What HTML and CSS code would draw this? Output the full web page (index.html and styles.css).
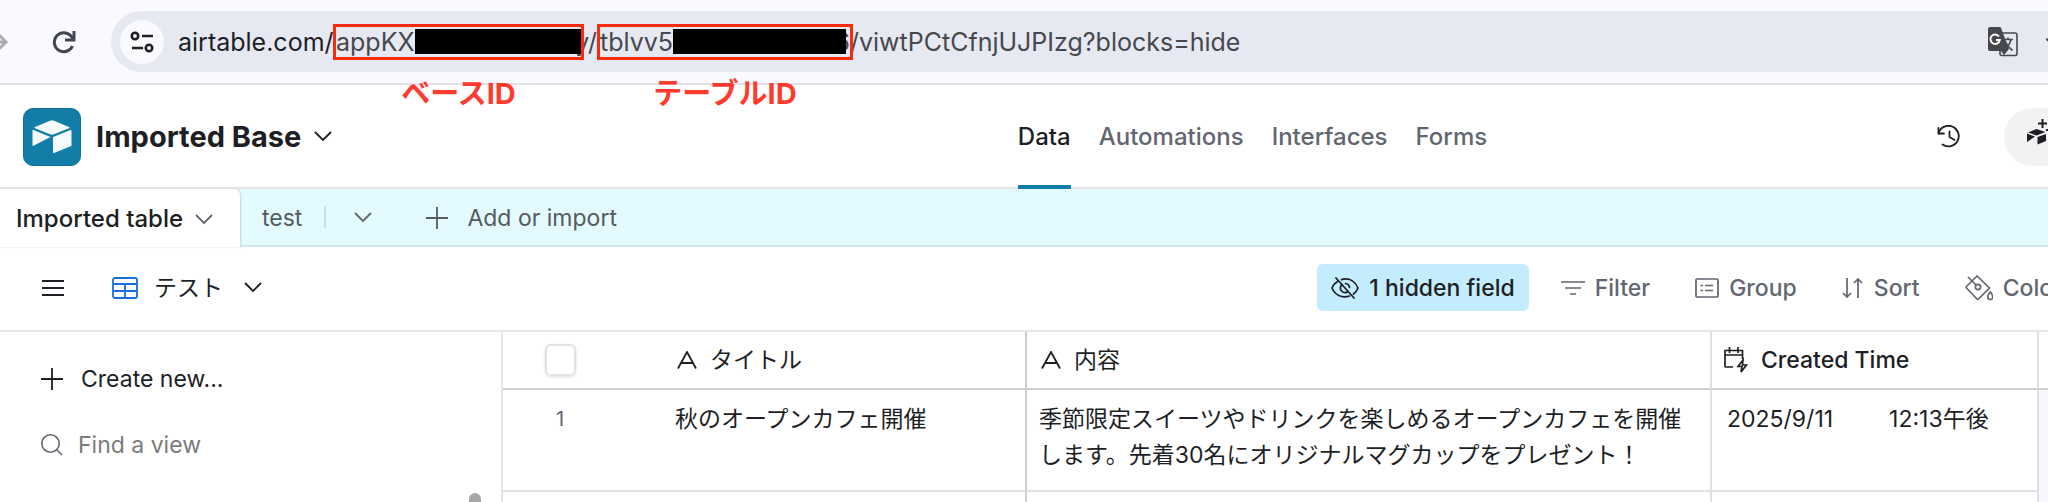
FILE: index.html
```html
<!DOCTYPE html>
<html lang="ja">

<head>
  <meta charset="UTF-8">
  <meta name="viewport" content="width=device-width, initial-scale=1.0">
  <title>Imported Base</title>
  <link rel="stylesheet" href="styles.css">
</head>

<body>
  <!-- Browser bar -->
  <div class="browser-bar">
    <button class="icon-button forward" aria-label="Forward">
      <svg width="20" height="24" viewBox="0 0 20 24" fill="none" stroke="#aaaab0" stroke-width="3"><path d="M0 12h17M8 3l9 9-9 9"/></svg>
    </button>
    <button class="icon-button" aria-label="Reload">
      <svg width="24" height="24" viewBox="0 0 24 24" fill="none" stroke="#3f4554" stroke-width="3"><path d="M20.500 16A9.500 9.500 0 1 1 19 6l2 2.500"/><path d="M22 1v9h-9"/></svg>
    </button>
    <div class="address-bar">
      <button class="site-info" aria-label="Site information">
        <svg width="24" height="24" viewBox="0 0 24 24" fill="none" stroke="#1f1f24" stroke-width="2.600"><circle cx="5" cy="6" r="3.200"/><path d="M12 6h11M2 18h11"/><circle cx="19" cy="18" r="3.200"/></svg>
      </button>
      <div class="url" role="textbox" aria-label="Address">
        <span class="host">airtable.com/</span>
        <span class="mark mark-base"><span>appKX</span><i class="mask"></i><b class="mark-label">ベースID</b></span>
        <span class="slash">y/</span>
        <span class="mark mark-table"><span>tblvv5</span><i class="mask"></i><span>6</span><b class="mark-label">テーブルID</b></span>
        <span class="path">/viwtPCtCfnjUJPIzg?blocks=hide</span>
      </div>
      <button class="icon-button translate" aria-label="Translate">
        <svg width="30" height="30" viewBox="0 0 30 30"><rect x="12" y="6" width="17" height="22.500" rx="2" fill="none" stroke="#47484d" stroke-width="1.600"/><path d="M2 0h9.500a2 2 0 0 1 1.600 1.200L21 22l-5 6-3-4H2a2 2 0 0 1-2-2V2a2 2 0 0 1 2-2z" fill="#47484d"/><path d="M11 9.500A4.700 4.700 0 1 0 11.800 13H8" fill="none" stroke="#fff" stroke-width="1.900"/><path d="M15.500 12.500H25M20 10.500v2M23 12.500q-1.500 6-6 9.500M17.500 15q2.500 5 7 8.500" fill="none" stroke="#47484d" stroke-width="1.600"/></svg>
      </button>
      <button class="icon-button star" aria-label="Bookmark">
        <svg width="26" height="26" viewBox="0 0 26 26" fill="none" stroke="#47484d" stroke-width="2"><path d="M13 2l3 8 9 .5-7 5.500 2.500 8.500L13 19.500 5.500 24.500 8 16 1 10.500l9-.5z"/></svg>
      </button>
    </div>
  </div>

  <!-- Base header -->
  <header class="base-header">
    <div class="brand">
      <div class="logo">
        <svg width="40" height="34" viewBox="0 0 40 34" fill="#f5fafc"><path d="M18 .8a5 5 0 0 1 4 0L37 7a.6.6 0 0 1 0 1.200L22 14.200a5 5 0 0 1-4 0L3 8.200A.6.6 0 0 1 3 7z"/><path d="M39.500 10.500v14.700a1 1 0 0 1-.7 1L22 33a.7.7 0 0 1-1-.7V17.800a1 1 0 0 1 .7-1l16.800-6.700a.7.7 0 0 1 1 .4z"/><path d="M.5 10.500a.7.7 0 0 1 1-.5L18.500 17 1.500 25.800a.7.7 0 0 1-1-.6z"/></svg>
      </div>
      <h1>Imported Base</h1>
      <button class="icon-button" aria-label="Base menu">
        <svg class="chevron dark" viewBox="0 0 18 11"><path d="M1 1l8 8 8-8"/></svg>
      </button>
    </div>
    <nav class="main-nav">
      <a href="#" class="active">Data</a>
      <a href="#">Automations</a>
      <a href="#">Interfaces</a>
      <a href="#">Forms</a>
    </nav>
    <div class="header-tools">
      <button class="icon-button" aria-label="History">
        <svg width="24" height="24" viewBox="0 0 24 24" fill="none" stroke="#1d1f25" stroke-width="1.800" stroke-linecap="round" stroke-linejoin="round"><path d="M1.500 8.500A10.300 10.300 0 1 1 5.500 19.500"/><path d="M1.500 3v5.500H7M12.500 6.500V12l5 3"/></svg>
      </button>
      <button class="assistant" aria-label="Assistant">
        <svg width="34" height="36" viewBox="0 0 34 36" fill="#1d1f25"><path d="M9.500 10L18.500 13 9.500 16.500 1 13.500z"/><path d="M0 14.500l8 3-8 5.500zM19 15v7L10.500 25.500V18z"/><path d="M15.500 0v9M11 4.500h9M23 7v8M19 11h8" stroke="#1d1f25" stroke-width="2"/></svg>
      </button>
    </div>
  </header>

  <!-- Table tabs -->
  <div class="tabs">
    <button class="tab active">Imported table
      <svg class="chevron" viewBox="0 0 18 11"><path d="M1 1l8 8 8-8"/></svg>
    </button>
    <button class="tab">test</button>
    <span class="divider"></span>
    <button class="icon-button tab-list" aria-label="All tables">
      <svg class="chevron" viewBox="0 0 18 11"><path d="M1 1l8 8 8-8"/></svg>
    </button>
    <button class="tab add-tab">
      <svg width="22" height="22" viewBox="0 0 22 22" fill="none" stroke="#555b5e" stroke-width="1.800"><path d="M11 0v22M0 11h22"/></svg>
      Add or import
    </button>
  </div>

  <!-- View toolbar -->
  <div class="toolbar">
    <button class="icon-button" aria-label="Toggle sidebar">
      <svg width="22" height="18" viewBox="0 0 22 18" stroke="#1d1f25" stroke-width="1.800"><path d="M0 2h22M0 9h22M0 16h22"/></svg>
    </button>
    <button class="view-name">
      <svg width="26" height="22" viewBox="0 0 26 22" fill="none" stroke="#166ee1" stroke-width="1.800"><rect x="1" y="1" width="24" height="20" rx="2"/><path d="M1 7h24M1 14h24M13 7v14"/></svg>
      <span>テスト</span>
      <svg class="chevron dark" viewBox="0 0 18 11"><path d="M1 1l8 8 8-8"/></svg>
    </button>
    <div class="tools">
      <button class="tool hidden-field">
        <svg width="28" height="22" viewBox="0 0 28 22" fill="none" stroke="#1d1f25" stroke-width="1.700" stroke-linecap="round"><path d="M5 1l18 20M10.500 2.600C19 .2 24.500 5 27 11c-1 2.500-2.500 4.500-4.500 6M6.500 4.500C4 6 2 8.500 1 11c3 7 9.500 10.500 17.500 8"/><path d="M11 7.500a4.600 4.600 0 0 0 6 7M14.500 6.500a4.600 4.600 0 0 1 4 4"/></svg>
        1 hidden field
      </button>
      <button class="tool">
        <svg width="24" height="14" viewBox="0 0 24 14" stroke="#616670" stroke-width="1.700"><path d="M0 1h24M4 7h16M9 13h6"/></svg>
        Filter
      </button>
      <button class="tool">
        <svg width="24" height="20" viewBox="0 0 24 20" fill="none" stroke="#616670" stroke-width="1.700"><rect x="1" y="1" width="22" height="18" rx="1"/><path d="M5.500 7.500h2.500M10 7.500h8M5.500 12.500h2.500M10 12.500h8"/></svg>
        Group
      </button>
      <button class="tool">
        <svg width="22" height="20" viewBox="0 0 22 20" fill="none" stroke="#616670" stroke-width="1.700"><path d="M5 0v19M1 15l4 4 4-4M16 20V1M12 5l4-4 4 4"/></svg>
        Sort
      </button>
      <button class="tool">
        <svg width="28" height="26" viewBox="0 0 28 26" fill="none" stroke="#616670" stroke-width="1.700"><path d="M12 1L1.500 11.500a1 1 0 0 0 0 1.500L12 24a1 1 0 0 0 1.500 0L24.500 13z"/><path d="M3 2l8 8"/><circle cx="13" cy="12" r="2.600"/><path d="M25.300 17q-2.500 3-2.500 5a2.500 2.500 0 0 0 5 0q0-2-2.500-5z"/></svg>
        Color
      </button>
    </div>
  </div>

  <main class="workspace">
    <aside class="sidebar">
      <button class="create-view">
        <svg width="22" height="22" viewBox="0 0 22 22" fill="none" stroke="#1d1f25" stroke-width="1.800"><path d="M11 0v22M0 11h22"/></svg>
        Create new...
      </button>
      <label class="find-view">
        <svg width="22" height="22" viewBox="0 0 22 22" fill="none" stroke="#616670" stroke-width="1.600"><circle cx="9.500" cy="9.500" r="8.700"/><path d="M15.500 15.500l5.500 5.500"/></svg>
        <input type="text" placeholder="Find a view" aria-label="Find a view">
      </label>
      <div class="scroll-thumb"></div>
    </aside>

    <table class="grid">
      <colgroup>
        <col class="col-number">
        <col class="col-title">
        <col class="col-content">
        <col class="col-time">
        <col>
      </colgroup>
      <thead>
        <tr>
          <th class="number"><input type="checkbox" aria-label="Select all rows"></th>
          <th class="title">
            <div class="field"><svg class="text-icon" viewBox="0 0 20 18"><path d="M1 17.500L10 1l9 16.500M4.500 12h11"/></svg>タイトル</div>
          </th>
          <th>
            <div class="field"><svg class="text-icon" viewBox="0 0 20 18"><path d="M1 17.500L10 1l9 16.500M4.500 12h11"/></svg>内容</div>
          </th>
          <th>
            <div class="field time-field">
              <svg width="24" height="26" viewBox="0 0 24 26" fill="none" stroke="#1d1f25" stroke-width="1.700"><path d="M9 20H2a1 1 0 0 1-1-1V3.500h17.500V12M1 8h17.500M5.500 0v6M14 0v6"/><path d="M19 13l-5 6.500h4l-1 5.500 5.500-7h-4z"/></svg>
              Created Time
            </div>
          </th>
          <th></th>
        </tr>
      </thead>
      <tbody>
        <tr>
          <td class="number">1</td>
          <td class="title">秋のオープンカフェ開催</td>
          <td class="content">季節限定スイーツやドリンクを楽しめるオープンカフェを開催します。先着30名にオリジナルマグカップをプレゼント！</td>
          <td><div class="time"><span>2025/9/11</span><span>12:13午後</span></div></td>
          <td class="empty"></td>
        </tr>
        <tr class="next-row">
          <td></td>
          <td class="title"></td>
          <td></td>
          <td></td>
          <td class="empty"></td>
        </tr>
      </tbody>
    </table>
  </main>
</body>

</html>
```
FILE: styles.css
```css
* {
  box-sizing: border-box;
  margin: 0;
  padding: 0;
}

body {
  height: 100vh;
  display: flex;
  flex-direction: column;
  overflow: hidden;
  background: #fff;
  color: #1d1f25;
  font-family: Inter, "Noto Sans CJK JP", sans-serif;
  font-size: 23px;
  line-height: 36px;
}

button {
  border: none;
  background: none;
  color: inherit;
  font: inherit;
  cursor: pointer;
}

svg {
  display: block;
  flex-shrink: 0;
}

.icon-button {
  display: flex;
  flex-shrink: 0;
}

.chevron {
  width: 18px;
  height: 11px;
  fill: none;
  stroke: #616670;
  stroke-width: 1.8;
}

.chevron.dark {
  stroke: #1d1f25;
}

/* Browser bar */
.browser-bar {
  flex-shrink: 0;
  display: flex;
  align-items: center;
  height: 85px;
  border-bottom: 2px solid #e3e1ec;
  background: #faf9ff;
}

.forward {
  margin-left: -11px;
  margin-right: 43px;
}

.address-bar {
  flex: 1;
  display: flex;
  align-items: center;
  height: 61px;
  margin-left: 35px;
  padding-left: 9px;
  border-radius: 31px 0 0 31px;
  background: #e7e9f2;
}

.site-info {
  display: flex;
  align-items: center;
  justify-content: center;
  width: 44px;
  height: 44px;
  margin-right: 14px;
  border-radius: 50%;
  background: #faf9ff;
}

.url {
  display: flex;
  align-items: center;
  color: #47484d;
  font-size: 25px;
  white-space: nowrap;
}

.host {
  width: 155px;
  color: #1d1f25;
}

.mark {
  position: relative;
  display: flex;
  align-items: center;
  height: 36px;
  border: 3px solid #fa2a0c;
}

.mark-base {
  z-index: 1;
  width: 251px;
}

.mark-table {
  width: 256px;
}

.slash {
  margin-left: -9px;
  width: 22px;
  text-align: right;
}

.mask {
  position: relative;
  flex: 1;
  height: 25px;
  background: #000;
}

.mark-table .mask {
  margin-right: -12px;
}

.mark-label {
  position: absolute;
  left: 0;
  right: 0;
  top: 49px;
  color: #ff3b30;
  font-size: 29px;
  line-height: 36px;
  text-align: center;
}

.path {
  margin-left: -3px;
}

.translate {
  margin-left: auto;
  margin-right: 28px;
}

.star {
  margin-right: -24px;
}

/* Base header */
.base-header {
  flex-shrink: 0;
  display: grid;
  grid-template-columns: 49.7% auto 1fr;
  height: 104px;
  border-bottom: 2px solid #e5e5e7;
}

.brand {
  display: flex;
  align-items: center;
  padding-left: 23px;
  padding-bottom: 1px;
}

.logo {
  display: flex;
  align-items: center;
  justify-content: center;
  width: 58px;
  height: 58px;
  margin-right: 15px;
  border: 1px solid #10709a;
  border-radius: 10px;
  background: #127da6;
}

h1 {
  margin-right: 13px;
  font-size: 29px;
  font-weight: 700;
}

.main-nav {
  display: flex;
  gap: 28px;
}

.main-nav a {
  height: 104px;
  color: #616670;
  font-size: 24px;
  font-weight: 500;
  line-height: 103px;
  text-decoration: none;
}

.main-nav .active {
  border-bottom: 4px solid #127da6;
  color: #1d1f25;
}

.header-tools {
  display: flex;
  align-items: center;
  justify-content: flex-end;
  gap: 43px;
}

.assistant {
  width: 100px;
  height: 58px;
  margin-right: -56px;
  padding-left: 23px;
  border-radius: 29px;
  background: #f2f2f2;
}

/* Table tabs */
.tabs {
  flex-shrink: 0;
  display: flex;
  align-items: center;
  height: 58px;
  border-bottom: 2px solid #d3e7ed;
  background: #e3fafe;
}

.tab {
  display: flex;
  align-items: center;
  height: 58px;
  padding-top: 2px;
  color: #555b5e;
}

.tab.active {
  gap: 12px;
  width: 240px;
  margin-right: 22px;
  margin-bottom: -2px;
  padding-left: 16px;
  border-radius: 0 6px 0 0;
  background: #fff;
  box-shadow: 1px 0 2px #c5d6da;
  color: #1d1f25;
  font-size: 24px;
  font-weight: 500;
}

.divider {
  width: 2px;
  height: 22px;
  margin-left: 22px;
  background: #cbdfe4;
}

.tab-list {
  margin: 0 54px 0 28px;
}

.add-tab {
  gap: 19px;
}

/* View toolbar */
.toolbar {
  flex-shrink: 0;
  display: flex;
  align-items: center;
  height: 85px;
  padding-left: 42px;
  padding-bottom: 2px;
  border-bottom: 2px solid #e5e5e5;
}

.view-name {
  display: flex;
  align-items: center;
  gap: 16px;
  margin-left: 48px;
}

.view-name .chevron {
  margin-left: 5px;
}

.tools {
  display: flex;
  align-items: center;
  margin-left: auto;
  margin-right: -14px;
}

.tool {
  display: flex;
  align-items: center;
  gap: 10px;
  height: 47px;
  margin-right: 45px;
  color: #616670;
  font-weight: 500;
  white-space: nowrap;
}

.tool:last-child {
  margin-right: 0;
}

.hidden-field {
  margin-right: 32px;
  padding: 0 14px;
  border-radius: 6px;
  background: #c4ecff;
  color: #1d1f25;
}

/* Sidebar */
.workspace {
  flex: 1;
  display: flex;
  min-height: 0;
  overflow: hidden;
}

.sidebar {
  position: relative;
  flex-shrink: 0;
  width: 503px;
  padding: 29px 40px 0 41px;
  border-right: 2px solid #e5e5e5;
  overflow: hidden;
}

.create-view {
  display: flex;
  align-items: center;
  gap: 18px;
}

.find-view {
  display: flex;
  align-items: center;
  gap: 15px;
  margin-top: 30px;
}

.find-view input {
  flex: 1;
  border: none;
  outline: none;
  font: inherit;
}

.find-view input::placeholder {
  color: #7b7b7b;
}

.scroll-thumb {
  position: absolute;
  right: 20px;
  top: 161px;
  bottom: -12px;
  width: 12px;
  border-radius: 6px;
  background: #a6a6a6;
}

/* Grid */
.grid {
  flex: 1;
  width: 100%;
  table-layout: fixed;
  border-collapse: separate;
  border-spacing: 0;
}

.col-number {
  width: 160px;
}

.col-title {
  width: 364px;
}

.col-content {
  width: 685px;
}

.col-time {
  width: 327px;
}

th {
  height: 58px;
  border-right: 2px solid #dddfe2;
  border-bottom: 2px solid #cfcfcf;
  font-weight: 400;
  text-align: left;
}

td {
  height: 102px;
  padding: 11px 15px;
  border-right: 2px solid #dddfe2;
  border-bottom: 2px solid #dde2e6;
  vertical-align: top;
}

th:last-child,
td:last-child,
th.number,
td:first-child {
  border-right: none;
}

th.title,
td.title {
  border-right-color: #ccc;
}

td.title,
td.content {
  padding-left: 12px;
}

td.content {
  padding-right: 10px;
}

td.number {
  padding-left: 53px;
  color: #616670;
  font-size: 20px;
}

.next-row td {
  height: 10px;
  padding: 0;
  border-bottom: none;
}

td.empty {
  border-bottom: none;
  background: #f7f8fc;
}

th.number {
  padding-left: 42px;
}

th input {
  display: block;
  appearance: none;
  width: 31px;
  height: 32px;
  border: 2px solid #e3e3e3;
  border-radius: 6px;
  box-shadow: 0 1px 3px #ddd;
}

.field {
  display: flex;
  align-items: center;
  gap: 13px;
  padding-left: 14px;
}

.time-field {
  padding-left: 12px;
  font-weight: 500;
}

.text-icon {
  width: 20px;
  height: 18px;
  fill: none;
  stroke: #1d1f25;
  stroke-width: 1.8;
}

.time {
  display: flex;
  gap: 56px;
}
```
